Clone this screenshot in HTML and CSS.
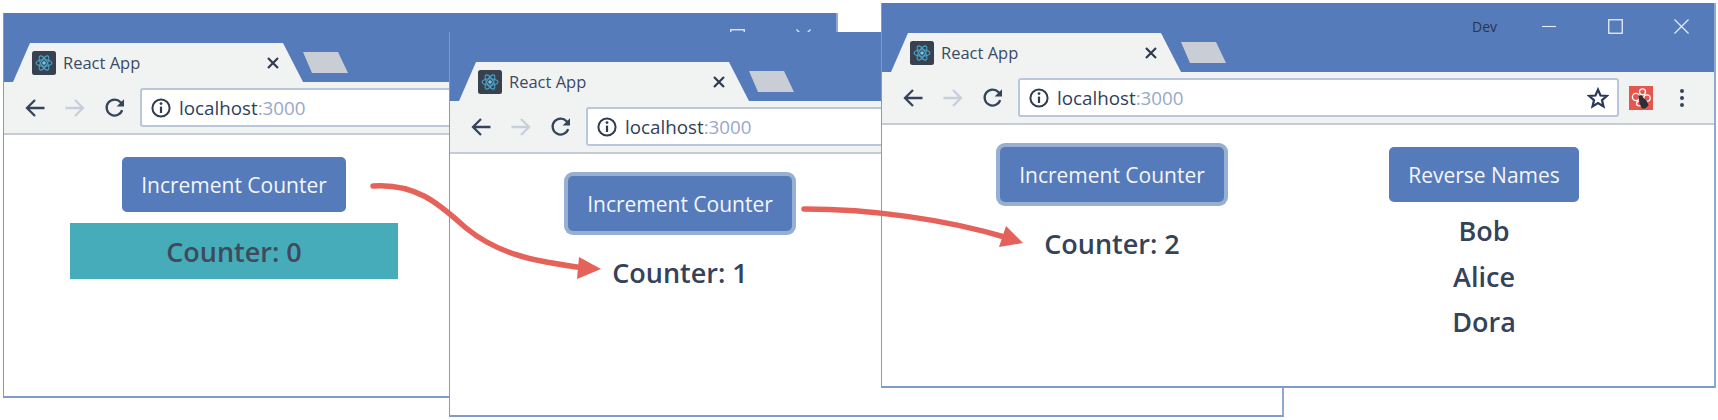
FILE: index.html
```html
<!DOCTYPE html>
<html lang="en">
<head>
<meta charset="utf-8">
<title>React App</title>
<link rel="stylesheet" href="styles.css">
</head>
<body>
<svg class="sprites" width="0" height="0" aria-hidden="true">
  <symbol id="i-react" viewBox="0 0 24 24">
    <rect width="24" height="24" rx="2.5" fill="#37414f"/>
    <g fill="none" stroke="#4aa5cc" stroke-width="1.1">
      <ellipse cx="12" cy="12" rx="8" ry="3.2"/>
      <ellipse cx="12" cy="12" rx="8" ry="3.2" transform="rotate(60 12 12)"/>
      <ellipse cx="12" cy="12" rx="8" ry="3.2" transform="rotate(120 12 12)"/>
    </g>
    <circle cx="12" cy="12" r="1.8" fill="#7cc4e0"/>
  </symbol>
  <symbol id="i-x" viewBox="0 0 12 12">
    <path d="M1 1 11 11M11 1 1 11" fill="none" stroke="#2f3b4e" stroke-width="2.2"/>
  </symbol>
  <symbol id="i-back" viewBox="0 0 22 22">
    <path d="M20.5 11H3M11 3 3 11l8 8" fill="none" stroke="currentColor" stroke-width="2.3"/>
  </symbol>
  <symbol id="i-forward" viewBox="0 0 22 22">
    <path d="M1.5 11H19M11 3l8 8-8 8" fill="none" stroke="currentColor" stroke-width="2.3"/>
  </symbol>
  <symbol id="i-reload" viewBox="0 0 22 22">
    <path d="M18.2 13.2A8 8 0 1 1 16.6 5.2L18.6 7.4" fill="none" stroke="#35445c" stroke-width="2.3"/>
    <path d="M20 2.2V9.6H12.6Z" fill="#35445c"/>
  </symbol>
  <symbol id="i-info" viewBox="0 0 22 22">
    <circle cx="11" cy="11" r="8.6" fill="none" stroke="#2f3b4e" stroke-width="2"/>
    <path d="M11 9.6V16" stroke="#2f3b4e" stroke-width="2.2"/>
    <circle cx="11" cy="6.6" r="1.4" fill="#2f3b4e"/>
  </symbol>
  <symbol id="i-star" viewBox="0 0 22 22">
    <path d="M11 2.6l2.5 5.9 6.3.5-4.8 4.2 1.5 6.2L11 16.1l-5.5 3.3L7 13.2 2.2 9l6.3-.5z" fill="none" stroke="#26395a" stroke-width="2.2"/>
  </symbol>
  <symbol id="i-ext" viewBox="0 0 24 24">
    <rect width="24" height="24" fill="#e5564e"/>
    <g fill="none" stroke="#fff" stroke-width="1.3">
      <circle cx="7" cy="11" r="3.6"/>
      <circle cx="13.5" cy="5.8" r="3"/>
      <circle cx="18" cy="12" r="3.2"/>
      <circle cx="10" cy="17.5" r="2.4"/>
    </g>
    <path d="M9.5 9.5h3.5l1 2 3.5 3 2 5-3.5 3h-3l-2.5-5z" fill="#2c2f38"/>
  </symbol>
  <symbol id="i-dots" viewBox="0 0 6 20">
    <circle cx="3" cy="3" r="2" fill="#35445c"/>
    <circle cx="3" cy="10" r="2" fill="#35445c"/>
    <circle cx="3" cy="17" r="2" fill="#35445c"/>
  </symbol>
  <symbol id="i-min" viewBox="0 0 16 16"><path d="M0 8H15" stroke="#e8ecf4" stroke-width="1.2"/></symbol>
  <symbol id="i-max" viewBox="0 0 16 16"><rect x=".8" y=".8" width="14.4" height="14.4" fill="none" stroke="#e8ecf4" stroke-width="1.4"/></symbol>
  <symbol id="i-close" viewBox="0 0 16 16"><path d="M.5.5 15.5 15.5M15.5.5.5 15.5" stroke="#e8ecf4" stroke-width="1.3"/></symbol>
</svg>

<main class="desktop">

  <section class="window w1">
    <header class="titlebar">
      <div class="tab">
        <svg class="favicon"><use href="#i-react"/></svg>
        <span class="tab-title">React App</span>
        <svg class="tab-close"><use href="#i-x"/></svg>
      </div>
      <div class="new-tab"></div>
      <div class="caption">
        <span class="profile">Dev</span>
        <span class="cap-btn"><svg class="cap-icon"><use href="#i-min"/></svg></span>
        <span class="cap-btn"><svg class="cap-icon"><use href="#i-max"/></svg></span>
        <span class="cap-btn"><svg class="cap-icon"><use href="#i-close"/></svg></span>
      </div>
    </header>
    <nav class="toolbar">
      <svg class="nav-icon"><use href="#i-back"/></svg>
      <svg class="nav-icon off"><use href="#i-forward"/></svg>
      <svg class="nav-icon"><use href="#i-reload"/></svg>
      <div class="omnibox">
        <svg class="info"><use href="#i-info"/></svg>
        <span class="url">localhost<span class="port">:3000</span></span>
        <svg class="star"><use href="#i-star"/></svg>
      </div>
      <svg class="ext"><use href="#i-ext"/></svg>
      <svg class="dots"><use href="#i-dots"/></svg>
    </nav>
    <div class="content">
      <div class="col">
        <button class="btn">Increment Counter</button>
        <div class="counter teal">Counter: 0</div>
      </div>
    </div>
  </section>

  <section class="window w2">
    <header class="titlebar">
      <div class="tab">
        <svg class="favicon"><use href="#i-react"/></svg>
        <span class="tab-title">React App</span>
        <svg class="tab-close"><use href="#i-x"/></svg>
      </div>
      <div class="new-tab"></div>
      <div class="caption">
        <span class="profile">Dev</span>
        <span class="cap-btn"><svg class="cap-icon"><use href="#i-min"/></svg></span>
        <span class="cap-btn"><svg class="cap-icon"><use href="#i-max"/></svg></span>
        <span class="cap-btn"><svg class="cap-icon"><use href="#i-close"/></svg></span>
      </div>
    </header>
    <nav class="toolbar">
      <svg class="nav-icon"><use href="#i-back"/></svg>
      <svg class="nav-icon off"><use href="#i-forward"/></svg>
      <svg class="nav-icon"><use href="#i-reload"/></svg>
      <div class="omnibox">
        <svg class="info"><use href="#i-info"/></svg>
        <span class="url">localhost<span class="port">:3000</span></span>
        <svg class="star"><use href="#i-star"/></svg>
      </div>
      <svg class="ext"><use href="#i-ext"/></svg>
      <svg class="dots"><use href="#i-dots"/></svg>
    </nav>
    <div class="content">
      <div class="col">
        <button class="btn focus">Increment Counter</button>
        <div class="counter">Counter: 1</div>
      </div>
    </div>
  </section>

  <section class="window w3">
    <header class="titlebar">
      <div class="tab">
        <svg class="favicon"><use href="#i-react"/></svg>
        <span class="tab-title">React App</span>
        <svg class="tab-close"><use href="#i-x"/></svg>
      </div>
      <div class="new-tab"></div>
      <div class="caption">
        <span class="profile">Dev</span>
        <span class="cap-btn"><svg class="cap-icon"><use href="#i-min"/></svg></span>
        <span class="cap-btn"><svg class="cap-icon"><use href="#i-max"/></svg></span>
        <span class="cap-btn"><svg class="cap-icon"><use href="#i-close"/></svg></span>
      </div>
    </header>
    <nav class="toolbar">
      <svg class="nav-icon"><use href="#i-back"/></svg>
      <svg class="nav-icon off"><use href="#i-forward"/></svg>
      <svg class="nav-icon"><use href="#i-reload"/></svg>
      <div class="omnibox">
        <svg class="info"><use href="#i-info"/></svg>
        <span class="url">localhost<span class="port">:3000</span></span>
        <svg class="star"><use href="#i-star"/></svg>
      </div>
      <svg class="ext"><use href="#i-ext"/></svg>
      <svg class="dots"><use href="#i-dots"/></svg>
    </nav>
    <div class="content">
      <div class="col">
        <button class="btn focus">Increment Counter</button>
        <div class="counter">Counter: 2</div>
      </div>
      <div class="col">
        <button class="btn narrow">Reverse Names</button>
        <ul class="names">
          <li>Bob</li>
          <li>Alice</li>
          <li>Dora</li>
        </ul>
      </div>
    </div>
  </section>

  <svg class="arrows" viewBox="0 0 1718 420" aria-hidden="true">
    <path class="arrow-line" d="M373 186C418 183 441 206 466 228C500 256 540 262 585 268"/>
    <path class="arrow-head" d="M579 257 601 269 577 279Z"/>
    <path class="arrow-line" d="M804 209C870 209 945 219 1008 238"/>
    <path class="arrow-head" d="M1006 226 1023 243 999 247Z"/>
  </svg>
</main>
</body>
</html>
```
FILE: styles.css
```css
* { box-sizing: border-box; }

html, body {
  margin: 0;
  padding: 0;
  background: #fff;
}

.sprites { position: absolute; }

.desktop {
  position: relative;
  width: 1718px;
  height: 420px;
  overflow: hidden;
  font-family: "Open Sans", "Noto Sans", sans-serif;
}

.window {
  position: absolute;
  width: 835px;
  height: 385px;
  display: flex;
  flex-direction: column;
  background: #fff;
  border-right: 2px solid #8fa9d0;
  border-bottom: 2px solid #7d9bcb;
  border-left: 1px solid #7d9bcb;
}

.w1 { left: 3px; top: 13px; }
.w2 { left: 449px; top: 32px; }
.w3 { left: 881px; top: 3px; }

.titlebar {
  position: relative;
  flex: none;
  height: 69px;
  display: flex;
  align-items: flex-end;
  background: #567bba;
}

.tab {
  flex: none;
  width: 290px;
  height: 39px;
  margin-left: 9px;
  padding-left: 19px;
  display: flex;
  align-items: center;
  background: #f1f3f3;
  clip-path: polygon(0 100%, 17px 0, 270px 0, 290px 100%);
}

.favicon { flex: none; width: 24px; height: 24px; }

.tab-title {
  margin-left: 7px;
  margin-top: -1px;
  font-size: 16.5px;
  color: #3a4a63;
}

.tab-close {
  flex: none;
  width: 12px;
  height: 12px;
  margin-left: auto;
  margin-right: 24px;
}

.new-tab {
  flex: none;
  width: 45px;
  height: 21px;
  margin-bottom: 9px;
  background: #c9cdd6;
  clip-path: polygon(0 0, 35px 0, 45px 100%, 9px 100%);
}

.caption {
  margin-left: auto;
  align-self: flex-start;
  display: flex;
  align-items: center;
  height: 46px;
}

.profile {
  margin-right: 19px;
  font-size: 14px;
  color: #2b3548;
}

.cap-btn {
  width: 66px;
  display: flex;
  justify-content: center;
}

.cap-icon { width: 15px; height: 15px; }

.toolbar {
  flex: none;
  height: 53px;
  display: flex;
  align-items: flex-start;
  padding-top: 6px;
  background: #f1f3f3;
  border-bottom: 2px solid #c6ccd6;
}

.nav-icon {
  flex: none;
  width: 22px;
  height: 22px;
  margin: 9px 0 0 18px;
  color: #35445c;
}

.nav-icon.off { margin-left: 18px; color: #c9cfd9; }
.nav-icon:first-child { margin-left: 20px; }

.omnibox {
  flex: none;
  width: 601px;
  height: 39px;
  margin-left: 14px;
  padding-left: 8px;
  display: flex;
  align-items: center;
  background: #fff;
  border: 2px solid #b9c6db;
  border-radius: 3px;
}

.info { flex: none; width: 22px; height: 22px; }

.url {
  margin-left: 7px;
  font-size: 18.8px;
  color: #2f3f5c;
}

.port { color: #97a9c8; }

.star {
  flex: none;
  width: 22px;
  height: 22px;
  margin-left: auto;
  margin-right: 8px;
}

.ext {
  flex: none;
  width: 24px;
  height: 24px;
  margin: 8px 0 0 10px;
}

.dots {
  flex: none;
  width: 6px;
  height: 20px;
  margin: 10px 0 0 26px;
}

.content {
  flex: 1;
  display: flex;
  gap: 44px;
  padding: 22px 0 0 66px;
}

.col {
  width: 328px;
  display: flex;
  flex-direction: column;
  align-items: center;
}

.btn {
  width: 224px;
  height: 55px;
  padding: 0;
  font: 400 21px "Open Sans", "Noto Sans", sans-serif;
  color: #f4f6fa;
  background: #567bba;
  border: 0;
  border-radius: 5px;
}

.btn.narrow { width: 190px; }
.btn.focus { box-shadow: 0 0 0 4px #97afd0; }

.counter {
  align-self: stretch;
  height: 56px;
  margin-top: 13px;
  display: flex;
  align-items: center;
  justify-content: center;
  font-size: 27px;
  font-weight: 600;
  color: #35425a;
}

.counter.teal {
  margin-top: 11px;
  background: #47acb9;
  color: #3f4a5a;
}

.names {
  list-style: none;
  margin: 6px 0 0;
  padding: 0;
  text-align: center;
  font-size: 27px;
  font-weight: 600;
  color: #35425a;
}

.names li { height: 45.5px; line-height: 45.5px; }

.arrows {
  position: absolute;
  left: 0;
  top: 0;
  width: 1718px;
  height: 420px;
  pointer-events: none;
}

.arrow-line {
  fill: none;
  stroke: #e5625a;
  stroke-width: 5.5;
  stroke-linecap: round;
}

.arrow-head { fill: #e5625a; }
```
